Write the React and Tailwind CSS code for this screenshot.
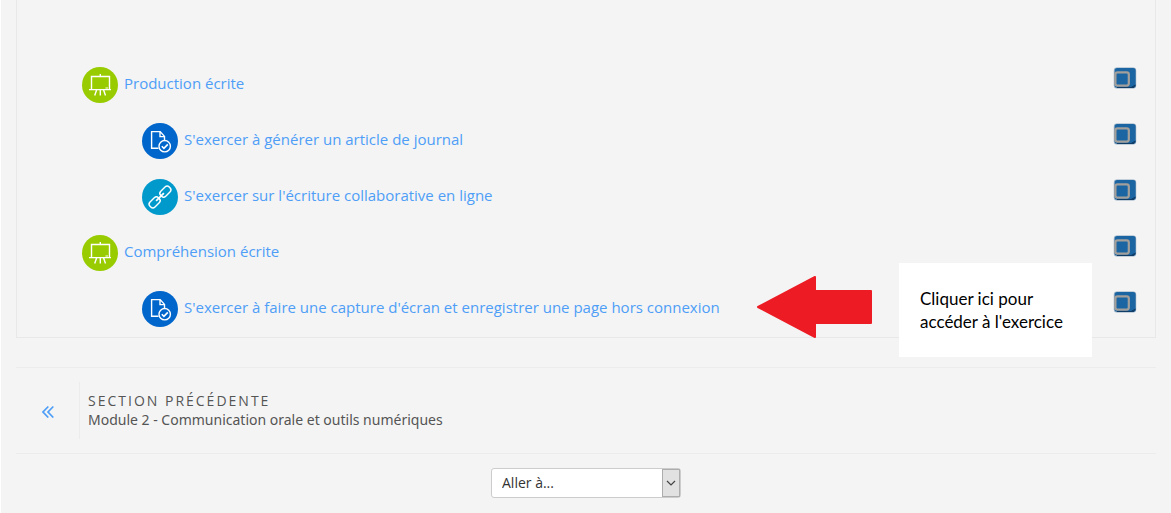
// =============================================================================
// App.jsx — Section de cours : activités et navigation
// =============================================================================

import React from "react";

const ACTIVITIES = [
  { id: 1, type: "lesson", label: "Production écrite" },
  { id: 2, type: "assign", label: "S'exercer à générer un article de journal", nested: true },
  { id: 3, type: "link", label: "S'exercer sur l'écriture collaborative en ligne", nested: true },
  { id: 4, type: "lesson", label: "Compréhension écrite" },
  {
    id: 5,
    type: "assign",
    label: "S'exercer à faire une capture d'écran et enregistrer une page hors connexion",
    nested: true,
    hint: true,
  },
];

function LessonIcon() {
  return (
    <svg viewBox="0 0 36 36" className="size-9 shrink-0" fill="none" stroke="#fff" aria-hidden="true">
      <circle cx="18" cy="18" r="18" fill="#9c0" stroke="none" />
      <path d="M9.5 22V9.5h18V22M7 22.6h22M18.3 9.5V7M18.3 23v5.5M14.6 23l-1.9 5.5M21.6 23l1.9 5.5" strokeWidth="1.4" />
      <path d="M23.5 21h2.5" strokeWidth="1" />
    </svg>
  );
}

function AssignIcon() {
  return (
    <svg viewBox="0 0 36 36" className="size-9 shrink-0" fill="none" stroke="#fff" strokeWidth="1.4" aria-hidden="true">
      <circle cx="18" cy="18" r="18" fill="#06c" stroke="none" />
      <path d="M16.5 25.3H9.6V8.6h8.6l4.3 4.8v3.8M18 8.6v5h4.5" />
      <circle cx="22.7" cy="23.2" r="5.7" />
      <path d="M19.8 23.3l2.1 2.1 3.9-4" strokeWidth="1.6" />
    </svg>
  );
}

function LinkIcon() {
  return (
    <svg viewBox="0 0 36 36" className="size-9 shrink-0" fill="none" stroke="#fff" strokeWidth="1.4" aria-hidden="true">
      <circle cx="18" cy="18" r="18" fill="#09c" stroke="none" />
      <g transform="rotate(-45 18 18)">
        <rect x="4.4" y="14.5" width="12" height="7" rx="3" />
        <rect x="19.6" y="14.5" width="12" height="7" rx="3" />
        <path d="M12.5 18h11" strokeWidth="1.8" />
      </g>
    </svg>
  );
}

const ICONS = { lesson: LessonIcon, assign: AssignIcon, link: LinkIcon };

function CompletionButton({ label }) {
  return (
    <button type="button" aria-label={label} className="mr-[18px] shrink-0">
      <svg viewBox="0 0 24 22" className="h-[22px] w-6" aria-hidden="true">
        <rect x="0.8" y="0.5" width="22.4" height="21" rx="3" fill="#8fa9bf" />
        <rect x="1.8" y="1" width="20.8" height="19.8" rx="2.5" fill="#1b65a3" />
        <path d="M4 20h14l4.5-2.5v1.5l-2 2H4z" fill="#103d68" />
        <rect x="2.4" y="5.4" width="13.4" height="13.2" rx="2" fill="#1b65a3" stroke="#a3a09c" strokeWidth="2.2" />
      </svg>
    </button>
  );
}

function Arrow() {
  return (
    <svg
      viewBox="0 0 116 62"
      className="absolute top-4 left-full ml-9 h-[62px] w-[116px] -translate-y-1/2"
      aria-hidden="true"
    >
      <path
        d="M2 31L59 1v14h56v32H59v14z"
        fill="#ed1c24"
        stroke="#ed1c24"
        strokeWidth="2"
        strokeLinejoin="round"
      />
    </svg>
  );
}

function ActivityRow({ activity }) {
  const Icon = ICONS[activity.type];
  return (
    <li
      className={`relative flex h-14 items-start justify-between pt-[10px] ${
        activity.nested ? "pl-[125px]" : "pl-[65px]"
      }`}
    >
      <a href="#" className="relative flex items-start gap-[6px] text-[15px] text-[#4e9ef7]">
        <Icon />
        <span className="leading-8">{activity.label}</span>
        {activity.hint && <Arrow />}
      </a>
      <CompletionButton label={`Achèvement : ${activity.label}`} />
      {activity.hint && (
        <p className="absolute -top-[18px] right-[63px] flex h-[94px] w-[193px] items-center bg-white pl-[21px] font-[Lato,sans-serif] text-[17px] leading-[23px] text-black">
          Cliquer ici pour
          <br />
          accéder à l'exercice
        </p>
      )}
    </li>
  );
}

function SectionNav() {
  return (
    <nav className="mt-[29px] border-y border-[#ececec] py-[14px]">
      <a href="#" className="flex h-[57px] items-stretch text-sm text-[#555]">
        <span className="flex w-16 items-center justify-center border-r border-[#ececec]">
          <svg viewBox="0 0 12 14" className="h-[14px] w-3" fill="none" stroke="#4e9ef7" strokeWidth="1.7" aria-hidden="true">
            <path d="M6.3 2.5L1 8l5.3 5.5M11.3 2.5L6 8l5.3 5.5" />
          </svg>
        </span>
        <span className="flex flex-col justify-center pb-[2px] pl-2 leading-[19px]">
          <span className="tracking-[2px] uppercase">Section précédente</span>
          <span className="font-['Noto_Sans',sans-serif]">Module 2 - Communication orale et outils numériques</span>
        </span>
      </a>
    </nav>
  );
}

function JumpMenu() {
  return (
    <div className="mt-[14px] flex justify-center pb-[15px]">
      <div className="relative w-[190px]">
        <select
          aria-label="Aller à"
          className="h-[30px] w-full appearance-none rounded-[3px] border border-[#ccc] bg-white pl-[10px] text-sm text-[#333]"
        >
          <option>Aller à...</option>
        </select>
        <span className="pointer-events-none absolute inset-y-px right-px flex w-[18px] items-center justify-center border border-[#adadad] bg-[#e1e1e1]">
          <svg viewBox="0 0 10 6" className="h-[6px] w-[10px]" fill="none" stroke="#444" strokeWidth="1.2" aria-hidden="true">
            <path d="M1 1l4 4 4-4" />
          </svg>
        </span>
      </div>
    </div>
  );
}

export default function App() {
  return (
    <div className="min-h-screen border-l border-white bg-[#f4f4f4] px-[15px] font-['Open_Sans',sans-serif]">
      <section className="border-x border-b border-[#e8e8e8] pt-[57px]">
        <ul>
          {ACTIVITIES.map((a) => (
            <ActivityRow key={a.id} activity={a} />
          ))}
        </ul>
      </section>
      <SectionNav />
      <JumpMenu />
    </div>
  );
}
